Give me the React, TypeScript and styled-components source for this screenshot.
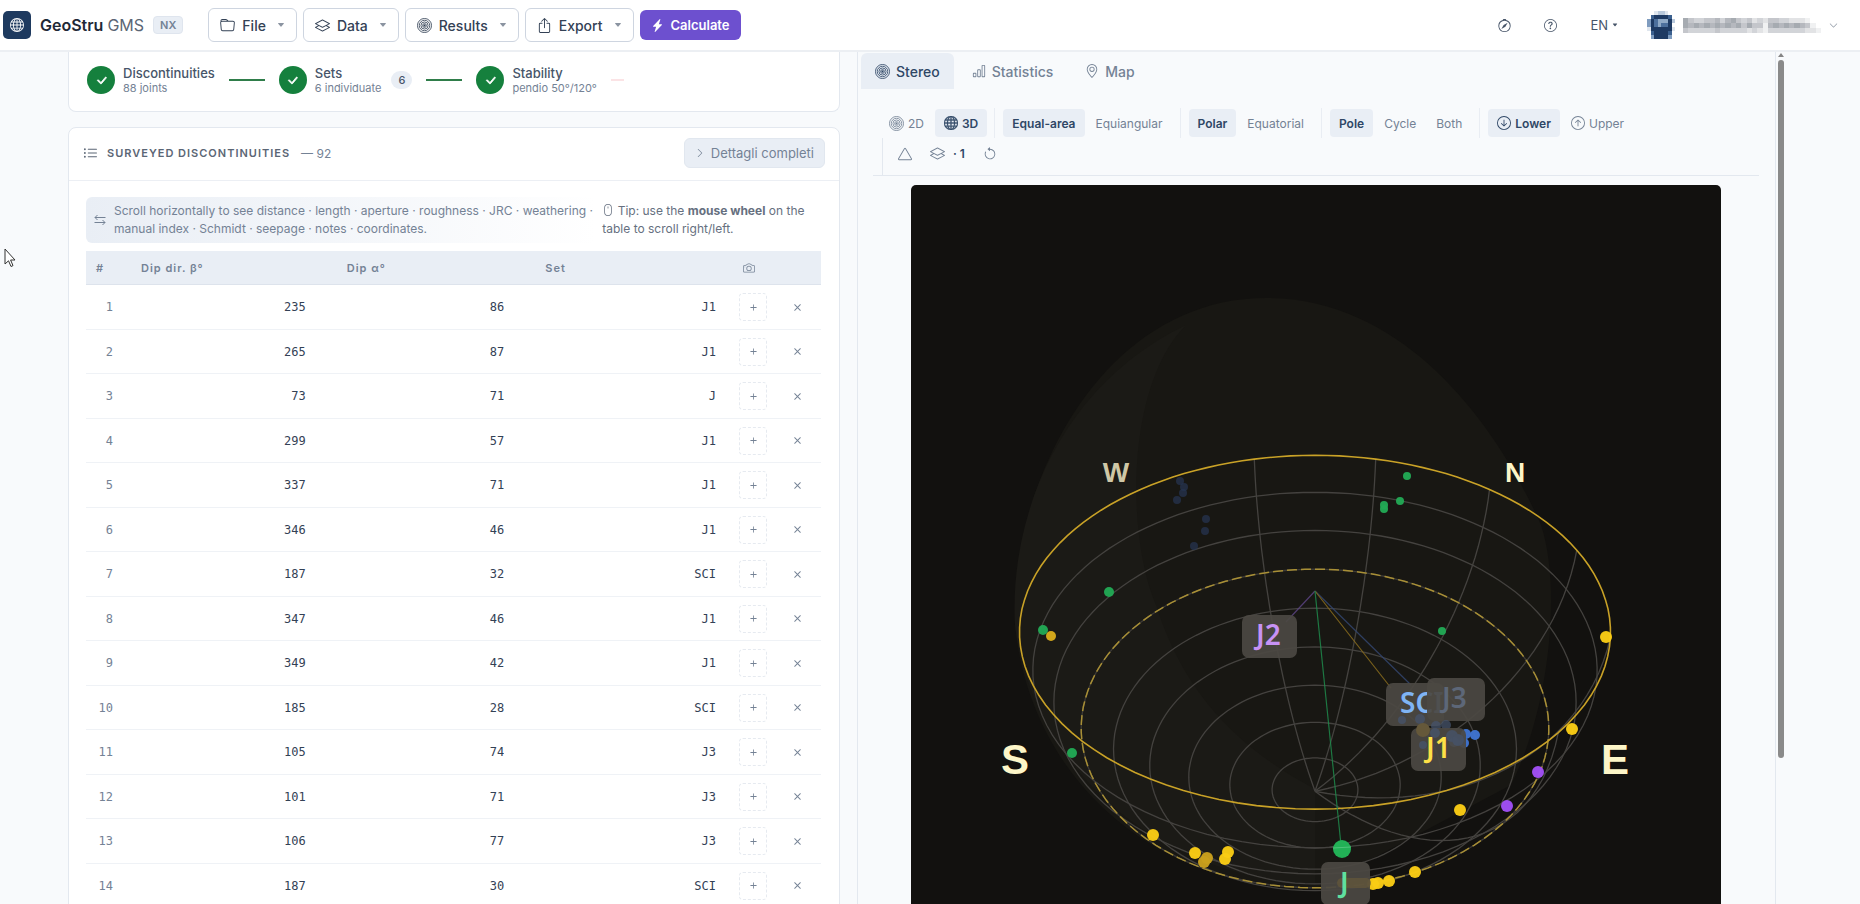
import React from "react";
import styled, { createGlobalStyle, css } from "styled-components";
import {
  BsArrowCounterclockwise,
  BsArrowDownCircle,
  BsArrowUpCircle,
  BsBarChart,
  BsBoxArrowUp,
  BsCamera,
  BsCaretDownFill,
  BsCheckLg,
  BsChevronDown,
  BsChevronRight,
  BsCompass,
  BsFolder,
  BsGeoAlt,
  BsGlobe,
  BsLayers,
  BsLightningChargeFill,
  BsListUl,
  BsMouse,
  BsPlus,
  BsQuestionCircle,
  BsTriangle,
  BsX,
} from "react-icons/bs";

const color = {
  page: "#f8fafc",
  panel: "#ffffff",
  line: "#e3e8ef",
  soft: "#e9eef5",
  navy: "#1e3a5f",
  ink: "#1f2937",
  text: "#475569",
  muted: "#748295",
  green: "#15803d",
  violet: "#6d50cf",
};

const GlobalStyle = createGlobalStyle`
  *, *::before, *::after { box-sizing: border-box; }
  body {
    margin: 0;
    background: ${color.page};
    color: ${color.text};
    font-family: Inter, "Liberation Sans", sans-serif;
    font-size: 12px;
  }
  button, input, select { font: inherit; color: inherit; }
  button { cursor: pointer; }
  svg { flex: none; display: block; }
`;

/* ---------- shell ---------- */

const Shell = styled.div`
  height: 100vh;
  display: flex;
  flex-direction: column;
  overflow: hidden;
`;

const Header = styled.header`
  flex: none;
  height: 52px;
  display: flex;
  align-items: center;
  justify-content: space-between;
  padding: 0 22px 0 3px;
  background: ${color.panel};
  border-bottom: 2px solid #eceff3;
`;

const HeaderGroup = styled.div`
  display: flex;
  align-items: center;
  gap: 6px;
`;

const Brand = styled.a`
  display: flex;
  align-items: center;
  gap: 9px;
  margin-right: 19px;
  color: ${color.ink};
  font-size: 16px;
  font-weight: 600;
  text-decoration: none;
  white-space: nowrap;
`;

const LogoMark = styled.span`
  display: grid;
  place-items: center;
  width: 28px;
  height: 28px;
  border-radius: 5px;
  background: ${color.navy};
  color: #fff;
`;

const BrandLight = styled.span`
  font-weight: 400;
  color: #5b6675;
`;

const Edition = styled.span`
  padding: 0 6px;
  border: 1px solid #dfe5ee;
  border-radius: 4px;
  background: ${color.soft};
  color: ${color.muted};
  font-size: 11px;
  line-height: 16px;
`;

const MenuButton = styled.button`
  display: flex;
  align-items: center;
  gap: 7px;
  height: 34px;
  padding: 0 11px;
  border: 1px solid #ced5e0;
  border-radius: 6px;
  background: #fff;
  color: #334155;
  font-size: 14px;
  font-weight: 500;
`;

const Caret = styled(BsCaretDownFill)`
  margin-left: 4px;
  color: #8b94a1;
`;

const CalculateButton = styled(MenuButton)`
  height: 30px;
  gap: 7px;
  border: 0;
  background: ${color.violet};
  color: #fff;
  font-size: 13px;
  font-weight: 600;
`;

const PlainButton = styled.button`
  display: flex;
  align-items: center;
  gap: 4px;
  padding: 0;
  border: 0;
  background: none;
  color: ${color.text};
  font-size: 13px;
`;

const Tools = styled.div`
  display: flex;
  align-items: center;
  gap: 33px;
`;

const Account = styled(PlainButton)`
  gap: 8px;
  margin-left: -4px;
  color: #8b94a1;
`;

const Main = styled.main`
  flex: 1;
  min-height: 0;
  display: grid;
  grid-template-columns: 790fr 934fr;
  padding: 0 68px;
`;

/* ---------- left pane ---------- */

const SurveyPane = styled.section`
  min-width: 0;
  padding-right: 17px;
  border-right: 1px solid ${color.line};
  overflow: hidden;
`;

const Card = styled.div<{ $clipped?: boolean }>`
  border: 1px solid ${color.line};
  border-radius: 8px;
  background: ${color.panel};
  ${(p) =>
    p.$clipped &&
    css`
      border-top: 0;
      border-radius: 0 0 8px 8px;
      margin-bottom: 15px;
    `}
`;

const Steps = styled.ol`
  list-style: none;
  display: flex;
  align-items: center;
  gap: 14px;
  height: 59px;
  margin: 0;
  padding: 0 18px 3px;
`;

const Step = styled.li`
  display: flex;
  align-items: center;
  gap: 8px;
`;

const StepDot = styled.span`
  display: grid;
  place-items: center;
  width: 28px;
  height: 28px;
  border-radius: 50%;
  background: ${color.green};
  color: #fff;
`;

const StepTitle = styled.div`
  font-size: 13px;
  line-height: 16px;
  font-weight: 500;
`;

const StepNote = styled.div`
  font-size: 11px;
  line-height: 14px;
  color: ${color.muted};
`;

const StepCount = styled.span`
  margin-left: 2px;
  padding: 0 7px;
  border-radius: 9px;
  background: ${color.soft};
  font-size: 11px;
  line-height: 18px;
  font-weight: 500;
`;

const StepLine = styled.li<{ $faint?: boolean }>`
  width: ${(p) => (p.$faint ? 13 : 36)}px;
  height: 2px;
  background: ${(p) => (p.$faint ? "#fbe3e5" : "#2f7d4a")};
`;

const CardHead = styled.div`
  display: flex;
  align-items: center;
  justify-content: space-between;
  height: 53px;
  padding: 0 14px 2px;
  border-bottom: 1px solid #eceff4;
`;

const CardTitle = styled.h2`
  display: flex;
  align-items: center;
  gap: 9px;
  margin: 0;
  font-size: 11px;
  font-weight: 600;
  letter-spacing: 1px;
  color: #5b6675;
`;

const CardCount = styled.span`
  margin-left: 2px;
  font-size: 12px;
  font-weight: 400;
  letter-spacing: 0;
  color: ${color.muted};
`;

const DetailsButton = styled.button`
  display: flex;
  align-items: center;
  gap: 6px;
  height: 30px;
  padding: 0 10px;
  border: 1px solid #e1e7ef;
  border-radius: 6px;
  background: ${color.soft};
  color: ${color.muted};
  font-size: 13px;
`;

const CardBody = styled.div`
  padding: 16px 18px 16px 17px;
`;

const Hints = styled.div`
  display: grid;
  grid-template-columns: 7fr 3fr;
  gap: 6px;
  margin-bottom: 8px;
  line-height: 18px;
`;

const HintBar = styled.p`
  display: flex;
  align-items: center;
  gap: 8px;
  margin: 0;
  padding: 5px 0 5px 8px;
  border-radius: 6px 0 0 6px;
  background: linear-gradient(90deg, #e9eef5, #ffffff);
  color: ${color.muted};
`;

const Tip = styled.p`
  margin: 0;
  padding: 5px 0;
  color: #667080;
`;

const TipIcon = styled(BsMouse)`
  display: inline-block;
  vertical-align: -1px;
`;

const Table = styled.table`
  width: 100%;
  table-layout: fixed;
  border-collapse: separate;
  border-spacing: 0;
`;

const Th = styled.th<{ $icon?: boolean }>`
  height: 34px;
  padding: 0 0 0 ${(p) => (p.$icon ? 16 : 10)}px;
  border-bottom: 1px solid #dde3ec;
  background: ${color.soft};
  color: ${color.muted};
  font-size: 11px;
  font-weight: 600;
  letter-spacing: 1px;
  text-align: left;
`;

const Row = styled.tr`
  height: 45px;
  &:nth-child(even) {
    height: 44px;
  }
`;

const Td = styled.td`
  padding: 0;
  border-bottom: 1px solid #eff2f6;
`;

const IndexCell = styled(Td)`
  padding-right: 18px;
  text-align: right;
  font-family: "DejaVu Sans Mono", monospace;
  font-size: 12px;
  color: ${color.muted};
`;

const CellInput = styled.input<{ $set?: boolean }>`
  display: block;
  width: 100%;
  height: 30px;
  padding: 0 ${(p) => (p.$set ? 11 : 31)}px 0 0;
  border: 0;
  background: none;
  color: #334155;
  font-family: "DejaVu Sans Mono", monospace;
  font-size: 12px;
  text-align: right;
`;

const CellButton = styled.button<{ $boxed?: boolean }>`
  display: grid;
  place-items: center;
  width: 28px;
  height: 28px;
  margin-left: ${(p) => (p.$boxed ? 12 : 6)}px;
  padding: 0;
  border: ${(p) => (p.$boxed ? "1px dashed #e6eaf0" : "0")};
  border-radius: 4px;
  background: none;
  color: ${color.muted};
`;

/* ---------- right pane ---------- */

const ViewArea = styled.section`
  min-width: 0;
  display: grid;
  grid-template-columns: minmax(0, 1fr) 17px;
  overflow: hidden;
`;

const ViewPane = styled.div`
  min-width: 0;
  padding: 1px 4px 0 3px;
  overflow: hidden;
`;

const Tabs = styled.div`
  display: flex;
`;

const Tab = styled.button<{ $active?: boolean }>`
  display: flex;
  align-items: center;
  gap: 6px;
  height: 36px;
  padding: 0 14px;
  margin-right: 4px;
  border: 0;
  border-radius: 6px 6px 0 0;
  background: ${(p) => (p.$active ? color.soft : "none")};
  color: ${(p) => (p.$active ? "#2f4766" : color.muted)};
  font-size: 14px;
  font-weight: 500;
`;

const Toolbar = styled.div`
  display: flex;
  flex-wrap: wrap;
  align-items: center;
  margin: 19px 12px 9px;
  border-bottom: 1px solid ${color.line};
`;

const ToolGroup = styled.div`
  display: flex;
  align-items: center;
  gap: 2px;
  height: 30px;
  padding: 0 8px;
  &:first-child {
    padding: 0 7px;
  }
  & + & {
    border-left: 1px solid #e9edf3;
  }
`;

const ToolButton = styled.button<{ $active?: boolean }>`
  display: flex;
  align-items: center;
  gap: 4px;
  height: 28px;
  padding: 0 9px;
  border: 0;
  border-radius: 4px;
  background: ${(p) => (p.$active ? color.soft : "none")};
  color: ${(p) => (p.$active ? "#2f4766" : color.muted)};
  font-size: 12px;
  font-weight: ${(p) => (p.$active ? 600 : 400)};
`;

const ToolRow = styled.div`
  display: flex;
  align-items: center;
  flex: 1 0 100%;
  height: 37px;
  padding: 0 6px 6px;
  margin-left: 9px;
  border-left: 1px solid ${color.line};
`;

const LayerCount = styled.b`
  font-weight: 600;
  color: #2f4766;
  margin-left: 4px;
`;

const Canvas = styled.figure`
  max-width: 810px;
  margin: 0 auto;
  border-radius: 5px;
  background: #12110f;
  overflow: hidden;
  svg {
    width: 100%;
    height: auto;
  }
`;

const ScrollTrack = styled.div`
  display: flex;
  flex-direction: column;
  align-items: center;
  gap: 3px;
  padding-top: 1px;
  border-left: 1px solid ${color.line};
  color: #858585;
`;

const ScrollThumb = styled.div`
  width: 6px;
  height: 82%;
  margin-right: 6px;
  border-radius: 3px;
  background: #8a8a8a;
`;

const ScrollArrow = styled.svg`
  margin-right: 6px;
`;

const Pointer = styled.svg`
  position: absolute;
  left: 4px;
  top: 248px;
`;

/* ---------- small drawings ---------- */

const Rings = ({ size = 15 }: { size?: number }) => (
  <svg width={size} height={size} viewBox="0 0 16 16" fill="none" stroke="currentColor" strokeWidth="0.9">
    <circle cx="8" cy="8" r="7.5" />
    <circle cx="8" cy="8" r="5.6" />
    <circle cx="8" cy="8" r="3.8" />
    <circle cx="8" cy="8" r="2" />
    <circle cx="8" cy="8" r="0.7" fill="currentColor" />
  </svg>
);

const SwapArrows = () => (
  <svg width="12" height="12" viewBox="0 0 12 12" fill="none" stroke="currentColor">
    <path d="M11.500 3.500H1M3.500 1L1 3.500L3.500 6M0.500 8.500H11M8.500 6L11 8.500L8.500 11" />
  </svg>
);

const AVATAR = [
  "..abba..",
  ".dnnnnd.",
  "cnmlllnb",
  "cnmlmmn.",
  "annnnnna",
  ".dnnnnd.",
  ".cnnnnc.",
];
const AVATAR_TONES: Record<string, string> = {
  a: "#dfe6ee", b: "#b9c9dc", c: "#7f9cbf", d: "#3b608f", n: "#1e3a63", m: "#4c6f9c", l: "#8fa9c6",
};

const AvatarMosaic = () => (
  <svg width="28" height="28" viewBox="0 0 8 7" preserveAspectRatio="none" shapeRendering="crispEdges">
    {AVATAR.map((row, y) =>
      [...row].map((c, x) =>
        c === "." ? null : <rect key={`${x}-${y}`} x={x} y={y} width="1" height="1" fill={AVATAR_TONES[c]} />
      )
    )}
  </svg>
);

const NAME = [
  "64334453564342324433222100",
  "65656565656464415656565410",
  "43333343333323213333333221",
];

const NameMosaic = () => (
  <svg width="138" height="15" viewBox="0 0 26 3" preserveAspectRatio="none" shapeRendering="crispEdges">
    {NAME.map((row, y) =>
      [...row].map((c, x) => (
        <rect key={`${x}-${y}`} x={x} y={y} width="1" height="1" fill="#5c6470" opacity={Number(c) / 11} />
      ))
    )}
  </svg>
);

/* ---------- 3D stereonet ---------- */

// Camera looks down on a unit hemisphere; points are projected with perspective.
const VIEW = { cx: 404, cy: 406, focal: 1003, distance: 3.49, cos: 0.813, sin: 0.582 };

function project(x: number, y: number, z: number): [number, number] {
  const depth = VIEW.distance - (y * VIEW.sin + z * VIEW.cos);
  return [
    VIEW.cx + (VIEW.focal * x) / depth,
    VIEW.cy - (VIEW.focal * (y * VIEW.cos - z * VIEW.sin)) / depth,
  ];
}

const rad = (deg: number) => (deg * Math.PI) / 180;

function hemispherePoint(azimuth: number, dip: number) {
  return project(
    Math.sin(rad(azimuth)) * Math.cos(rad(dip)),
    -Math.sin(rad(dip)),
    -Math.cos(rad(azimuth)) * Math.cos(rad(dip))
  );
}

const toPath = (pts: [number, number][]) => "M" + pts.map((p) => p.map((n) => n.toFixed(1)).join(" ")).join("L");

const parallel = (dip: number) =>
  toPath(Array.from({ length: 121 }, (_, i) => hemispherePoint(i * 3, dip)));

const meridian = (azimuth: number) =>
  toPath(Array.from({ length: 31 }, (_, i) => hemispherePoint(azimuth, i * 3)));

const POLES: { fill: string; r: number; opacity?: number; at: [number, number][] }[] = [
  { fill: "#263450", r: 4, opacity: 0.75, at: [[269, 296], [273, 302], [272, 308], [266, 315], [295, 334], [294, 346], [283, 361]] },
  { fill: "#22a855", r: 4, at: [[496, 291], [489, 316], [473, 320], [473, 324], [531, 446]] },
  { fill: "#22a855", r: 5, at: [[198, 407], [132, 445], [161, 568]] },
  { fill: "#d9ac1c", r: 5, at: [[140, 451]] },
  { fill: "#c9a01d", r: 6, at: [[293, 677], [296, 673]] },
  { fill: "#facc15", r: 6, at: [[695, 452], [661, 544], [549, 625], [242, 650], [284, 668], [314, 674], [317, 667], [504, 687], [478, 696], [467, 698], [462, 699]] },
  { fill: "#a14ff5", r: 6, at: [[627, 587], [596, 621]] },
  { fill: "#3f74d0", r: 5, at: [[564, 550], [555, 549], [553, 558], [543, 557]] },
];

function Tag({ x, y, w, children, fill, tx }: { x: number; y: number; w: number; tx: number; fill: string; children: string }) {
  return (
    <g>
      <rect x={x} y={y} width={w} height="43" rx="7" fill="#4b4843" fillOpacity="0.93" />
      <text x={tx} y={y + 30} fill={fill} fontFamily='"Noto Sans", sans-serif' fontSize="28" fontWeight="600">
        {children}
      </text>
    </g>
  );
}

const Stereonet = () => (
  <svg viewBox="0 0 810 810" role="img" aria-label="3D stereographic projection">
    <path
      d="M104 440C98 300 190 113 355 113C500 113 590 250 630 340C650 400 640 520 600 600L404 704C250 704 120 600 104 440Z"
      fill="#181713"
    />
    <path
      d="M104 440C98 330 150 200 275 140C215 200 215 350 245 420C270 500 320 560 404 604L404 700C230 690 120 570 104 440Z"
      fill="#1b1a16"
    />
    <g fill="none" stroke="#44423f" strokeWidth="1.3">
      {[10, 20, 40, 50, 60, 70, 80].map((dip) => (
        <path key={dip} d={parallel(dip)} />
      ))}
      {[-15, 15, 45, 75, 105, 135].map((az) => (
        <path key={az} d={meridian(az)} />
      ))}
    </g>
    <path d={parallel(30)} fill="none" stroke="#3d3a36" strokeWidth="1.3" />
    <path d={parallel(30)} fill="none" stroke="#a88f35" strokeWidth="1.5" strokeDasharray="10 4" />
    <path d={parallel(0)} fill="none" stroke="#c9a227" strokeWidth="1.6" />
    <g strokeWidth="1.2" opacity="0.85">
      <path d="M404 406L375 437" stroke="#5b4482" />
      <path d="M404 406L500 500" stroke="#33466f" />
      <path d="M404 406L480 503" stroke="#8a6d1e" />
      <path d="M404 406L430 660" stroke="#1f8a4c" />
    </g>
    {POLES.map((set) =>
      set.at.map(([x, y]) => (
        <circle key={`${x}-${y}`} cx={x} cy={y} r={set.r} fill={set.fill} opacity={set.opacity ?? 0.97} />
      ))
    )}
    <circle cx="431" cy="664" r="9" fill="#22b156" />
    <path d="M422 663L440 662" stroke="#4fc47b" />
    <Tag x={331} y={430} w={55} tx={345} fill="#c792f5">J2</Tag>
    <Tag x={475} y={498} w={58} tx={489} fill="#7fb4f5">SCI</Tag>
    <Tag x={516} y={493} w={58} tx={531} fill="#5d6778">J3</Tag>
    <g fill="#46556f" opacity="0.7">
      <circle cx="491" cy="535" r="4" />
      <circle cx="509" cy="534" r="5" />
      <circle cx="525" cy="541" r="5" />
      <circle cx="535" cy="540" r="5" />
    </g>
    <Tag x={500} y={543} w={55} tx={515} fill="#fde047">J1</Tag>
    <circle cx="512" cy="545" r="7" fill="#65583a" />
    <g fill="#46536a" opacity="0.8">
      <circle cx="524" cy="548" r="5" />
      <circle cx="541" cy="551" r="6" />
      <circle cx="547" cy="555" r="6" />
      <circle cx="512" cy="560" r="4" />
    </g>
    <rect x="410" y="677" width="49" height="43" rx="7" fill="#4b4843" fillOpacity="0.93" />
    <path d="M431 698H455" stroke="#65583a" strokeWidth="10" strokeLinecap="round" opacity="0.7" />
    <text x="429" y="708" fill="#5fe0a0" fontFamily='"Noto Sans", sans-serif' fontSize="28" fontWeight="600">J</text>
    <g fontFamily='"Liberation Sans", sans-serif' fontWeight="700" fill="#fdf6c8" textAnchor="middle">
      <text x="205" y="297" fontSize="28" fill="#cfc7a6">W</text>
      <text x="604" y="297" fontSize="28">N</text>
      <text x="104" y="589" fontSize="42">S</text>
      <text x="704" y="589" fontSize="42">E</text>
    </g>
  </svg>
);

/* ---------- data ---------- */

const joints: [number, number, string][] = [
  [235, 86, "J1"], [265, 87, "J1"], [73, 71, "J"], [299, 57, "J1"], [337, 71, "J1"],
  [346, 46, "J1"], [187, 32, "SCI"], [347, 46, "J1"], [349, 42, "J1"], [185, 28, "SCI"],
  [105, 74, "J3"], [101, 71, "J3"], [106, 77, "J3"], [187, 30, "SCI"],
];

const menus = [
  { label: "File", icon: <BsFolder size={15} /> },
  { label: "Data", icon: <BsLayers size={15} /> },
  { label: "Results", icon: <Rings size={15} /> },
  { label: "Export", icon: <BsBoxArrowUp size={15} /> },
];

export default function App() {
  return (
    <>
      <GlobalStyle />
      <Shell>
        <Header>
          <HeaderGroup>
            <Brand href="#">
              <LogoMark><BsGlobe size={14} /></LogoMark>
              <span>GeoStru <BrandLight>GMS</BrandLight></span>
              <Edition>NX</Edition>
            </Brand>
            {menus.map((m) => (
              <MenuButton key={m.label}>
                {m.icon}
                {m.label}
                <Caret size={8} />
              </MenuButton>
            ))}
            <CalculateButton><BsLightningChargeFill size={13} />Calculate</CalculateButton>
          </HeaderGroup>
          <Tools>
            <PlainButton aria-label="Guide"><BsCompass size={13} /></PlainButton>
            <PlainButton aria-label="Help"><BsQuestionCircle size={13} /></PlainButton>
            <PlainButton>EN<BsCaretDownFill size={6} /></PlainButton>
            <Account aria-label="Account"><AvatarMosaic /><NameMosaic /><BsChevronDown size={9} /></Account>
          </Tools>
        </Header>

        <Main>
          <SurveyPane>
            <Card $clipped>
              <Steps>
                <Step>
                  <StepDot><BsCheckLg size={13} strokeWidth={1} /></StepDot>
                  <div><StepTitle>Discontinuities</StepTitle><StepNote>88 joints</StepNote></div>
                </Step>
                <StepLine />
                <Step>
                  <StepDot><BsCheckLg size={13} strokeWidth={1} /></StepDot>
                  <div><StepTitle>Sets</StepTitle><StepNote>6 individuate</StepNote></div>
                  <StepCount>6</StepCount>
                </Step>
                <StepLine />
                <Step>
                  <StepDot><BsCheckLg size={13} strokeWidth={1} /></StepDot>
                  <div><StepTitle>Stability</StepTitle><StepNote>pendio 50°/120°</StepNote></div>
                </Step>
                <StepLine $faint />
              </Steps>
            </Card>

            <Card>
              <CardHead>
                <CardTitle>
                  <BsListUl size={15} />
                  SURVEYED DISCONTINUITIES
                  <CardCount>— 92</CardCount>
                </CardTitle>
                <DetailsButton><BsChevronRight size={10} />Dettagli completi</DetailsButton>
              </CardHead>
              <CardBody>
                <Hints>
                  <HintBar>
                    <SwapArrows />
                    <span>
                      Scroll horizontally to see distance · length · aperture · roughness · JRC · weathering ·
                      manual index · Schmidt · seepage · notes · coordinates.
                    </span>
                  </HintBar>
                  <Tip><TipIcon size={12} /> Tip: use the <b>mouse wheel</b> on the table to scroll right/left.</Tip>
                </Hints>
                <Table>
                  <colgroup>
                    <col width="45" /><col width="28%" /><col width="27%" /><col /><col width="50" /><col width="44" />
                  </colgroup>
                  <thead>
                    <tr>
                      <Th>#</Th><Th>Dip dir. β°</Th><Th>Dip α°</Th><Th>Set</Th>
                      <Th $icon aria-label="Photo"><BsCamera size={12} /></Th>
                      <Th aria-label="Remove" />
                    </tr>
                  </thead>
                  <tbody>
                    {joints.map(([dir, dip, set], i) => (
                      <Row key={i}>
                        <IndexCell>{i + 1}</IndexCell>
                        <Td><CellInput aria-label={`Dip direction ${i + 1}`} defaultValue={dir} /></Td>
                        <Td><CellInput aria-label={`Dip ${i + 1}`} defaultValue={dip} /></Td>
                        <Td><CellInput $set aria-label={`Set ${i + 1}`} defaultValue={set} /></Td>
                        <Td><CellButton $boxed aria-label="Add photo"><BsPlus size={13} /></CellButton></Td>
                        <Td><CellButton aria-label="Delete row"><BsX size={15} /></CellButton></Td>
                      </Row>
                    ))}
                  </tbody>
                </Table>
              </CardBody>
            </Card>
          </SurveyPane>

          <ViewArea>
            <ViewPane>
              <Tabs>
                <Tab $active><Rings />Stereo</Tab>
                <Tab><BsBarChart size={14} />Statistics</Tab>
                <Tab><BsGeoAlt size={14} />Map</Tab>
              </Tabs>
              <Toolbar>
                <ToolGroup>
                  <ToolButton><Rings />2D</ToolButton>
                  <ToolButton $active><BsGlobe size={14} strokeWidth={0.4} />3D</ToolButton>
                </ToolGroup>
                <ToolGroup>
                  <ToolButton $active>Equal-area</ToolButton>
                  <ToolButton>Equiangular</ToolButton>
                </ToolGroup>
                <ToolGroup>
                  <ToolButton $active>Polar</ToolButton>
                  <ToolButton>Equatorial</ToolButton>
                </ToolGroup>
                <ToolGroup>
                  <ToolButton $active>Pole</ToolButton>
                  <ToolButton>Cycle</ToolButton>
                  <ToolButton>Both</ToolButton>
                </ToolGroup>
                <ToolGroup>
                  <ToolButton $active><BsArrowDownCircle size={14} />Lower</ToolButton>
                  <ToolButton><BsArrowUpCircle size={14} />Upper</ToolButton>
                </ToolGroup>
                <ToolRow>
                  <ToolButton aria-label="Planes"><BsTriangle size={14} /></ToolButton>
                  <ToolButton aria-label="Layers"><BsLayers size={15} /><LayerCount>· 1</LayerCount></ToolButton>
                  <ToolButton aria-label="Reset view"><BsArrowCounterclockwise size={14} /></ToolButton>
                </ToolRow>
              </Toolbar>
              <Canvas><Stereonet /></Canvas>
            </ViewPane>
            <ScrollTrack>
              <ScrollArrow width="6" height="4" viewBox="0 0 6 4"><path d="M0 4L3 0L6 4Z" fill="currentColor" /></ScrollArrow>
              <ScrollThumb />
            </ScrollTrack>
          </ViewArea>
        </Main>
      </Shell>
      <Pointer width="12" height="20" viewBox="0 0 12 20" fill="#fff" stroke="#333" strokeWidth="1">
        <path d="M1 1V16L4.500 12.800L7 18.500L9 17.600L6.600 12H11Z" />
      </Pointer>
    </>
  );
}
